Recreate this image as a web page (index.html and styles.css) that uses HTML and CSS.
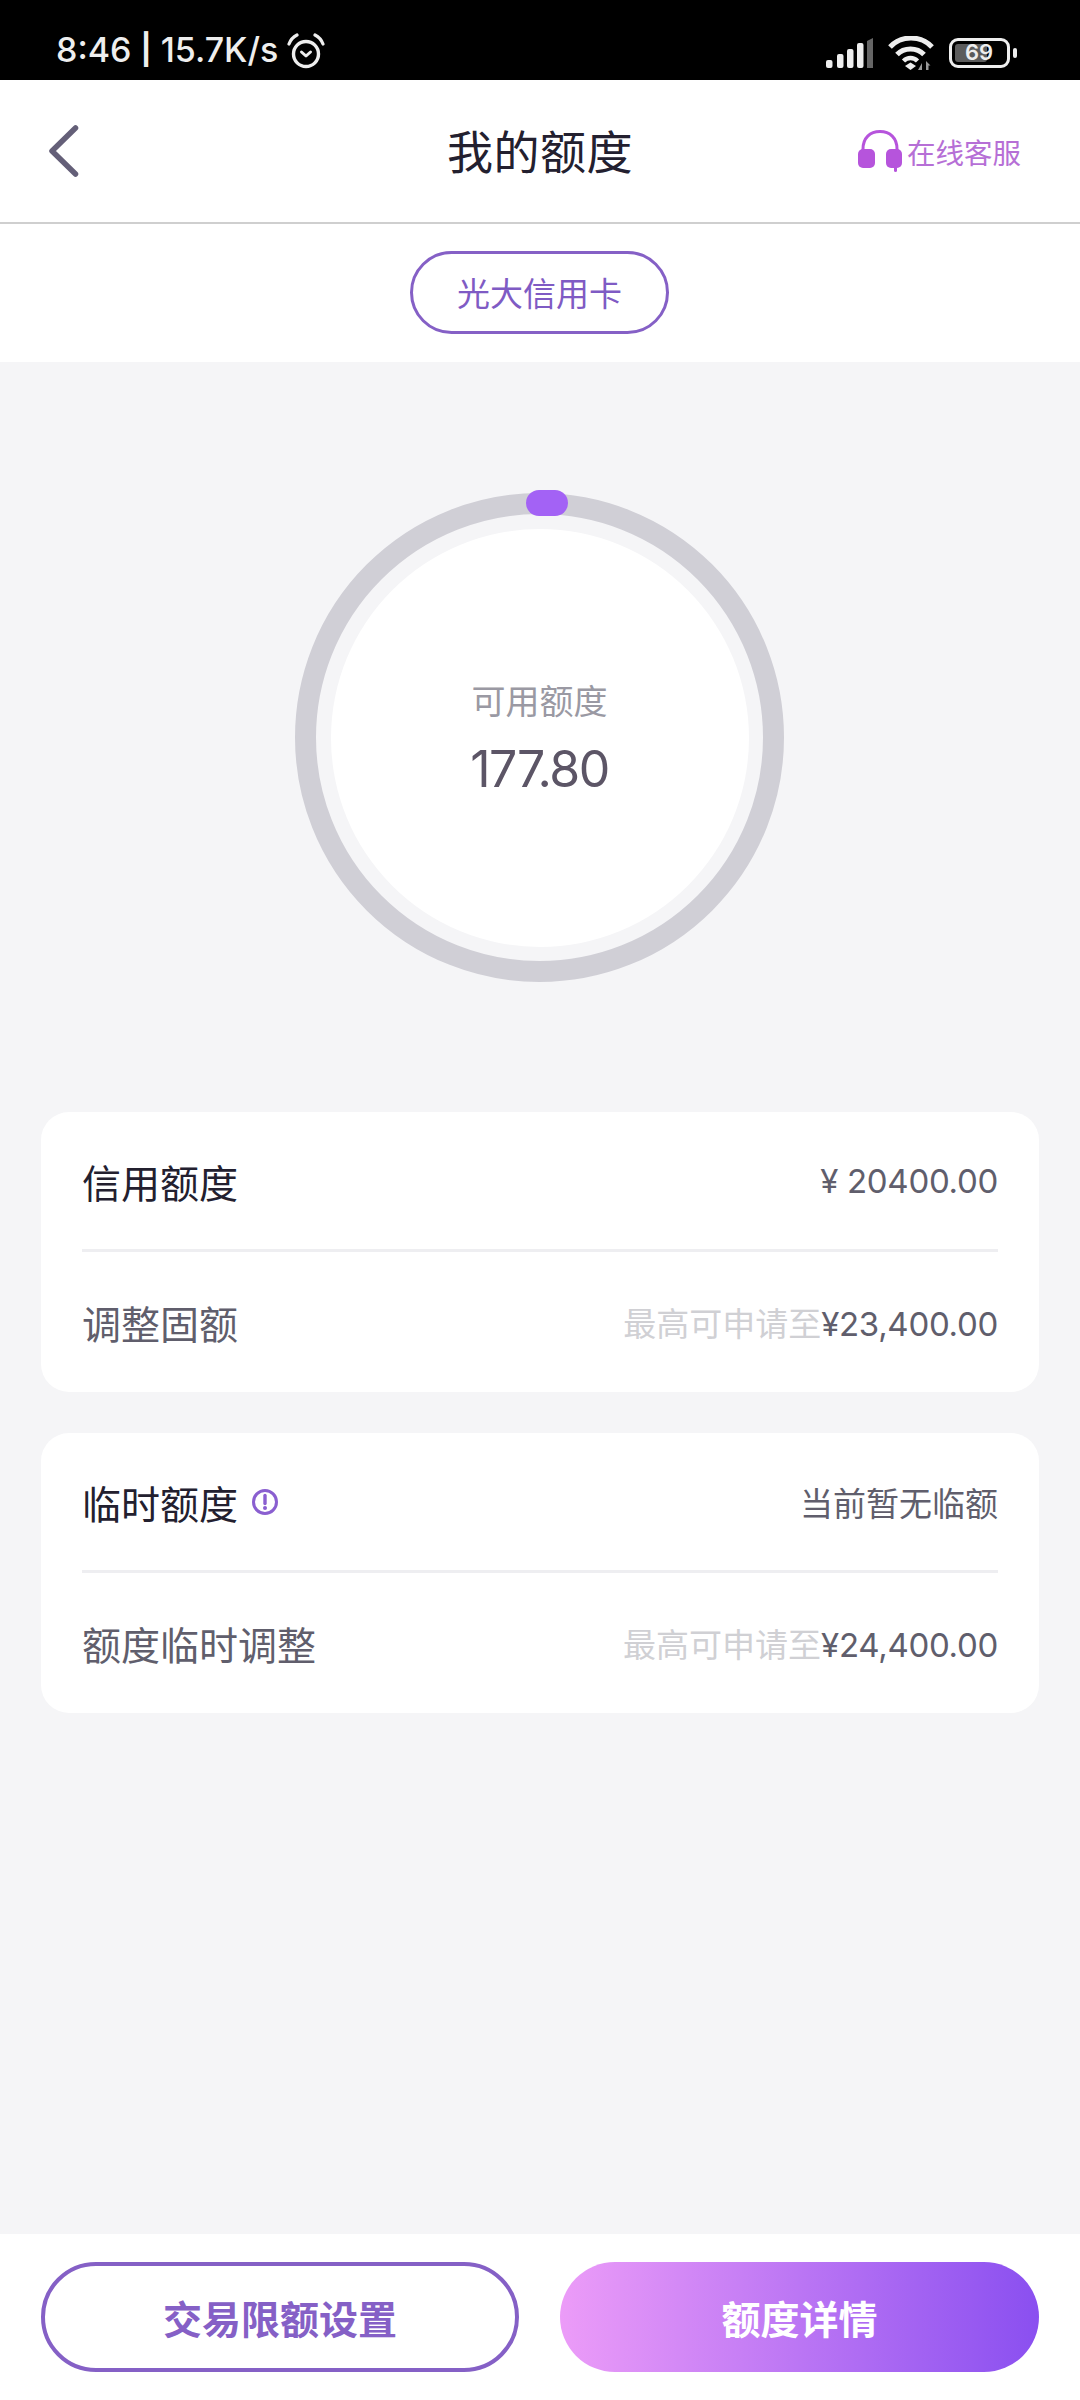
FILE: index.html
```html
<!DOCTYPE html>
<html lang="zh-CN">
<head>
    <meta charset="UTF-8">
    <meta name="viewport" content="width=device-width, initial-scale=1.0">
    <title>我的额度</title>
    <link rel="stylesheet" href="styles.css">
</head>

<body>

    <div class="statusbar">
        <div class="status-left">
            <span class="status-text">8:46 <b class="status-bar-sep">|</b> 15.7K/s</span>
            <svg width="38" height="38" viewBox="0 0 38 38">
                <circle cx="19" cy="23" r="12.500" fill="none" stroke="#eee" stroke-width="3.400"/>
                <path d="M14.500 21l4.500 4 4.500-4" fill="none" stroke="#eee" stroke-width="3" stroke-linecap="round" stroke-linejoin="round"/>
                <path d="M2 13C3.500 9 6 6 10 4M36 13C34.500 9 32 6 28 4" fill="none" stroke="#eee" stroke-width="3.200" stroke-linecap="round"/>
            </svg>
        </div>
        <div class="status-right">
            <svg width="47" height="30" viewBox="0 0 47 30">
                <rect x="0" y="22" width="6.500" height="8" rx="2" fill="#eee"/>
                <rect x="11" y="16" width="6.500" height="14" rx="2" fill="#eee"/>
                <rect x="21" y="11" width="6.500" height="19" rx="2" fill="#eee"/>
                <rect x="31" y="5" width="6.500" height="25" rx="2" fill="#eee"/>
                <path d="M41 3l6-3v30h-6z" fill="#666"/>
            </svg>
            <svg width="46" height="34" viewBox="0 0 46 34">
                <path d="M2 11C13-1 33-1 44 11" fill="none" stroke="#eee" stroke-width="5"/>
                <path d="M9 18.500C16 11 29 11 36 18.500" fill="none" stroke="#eee" stroke-width="5"/>
                <path d="M15.500 25c4-4 10-4 14 0" fill="none" stroke="#eee" stroke-width="4.500"/>
                <path d="M22.500 34l-5.500-4 5.500-3.500 5.500 3.500z" fill="#eee"/>
                <path d="M34 34v-7l-4 7zM38 34v-9l4.500 4.500h-2V34z" fill="#999"/>
            </svg>
            <div class="battery">
                <div class="battery-body"><div class="battery-fill"></div><span class="battery-num">69</span></div>
                <div class="battery-tip"></div>
            </div>
        </div>
    </div>

    <div class="topbar">
        <svg class="back-icon" width="30" height="52" viewBox="0 0 30 52">
            <path d="M26.500 3L3 26l23.500 23" fill="none" stroke="#645f78" stroke-width="5.500" stroke-linecap="round" stroke-linejoin="round"/>
        </svg>
        <h1 class="title">我的额度</h1>
        <div class="service">
            <svg width="44" height="42" viewBox="0 0 44 42">
                <path d="M5 22V19C5 8 12 1.500 22 1.500S39 8 39 19v3" fill="none" stroke="#b654dc" stroke-width="3"/>
                <rect x="0" y="19" width="17" height="19" rx="5" fill="#b654dc"/>
                <rect x="28" y="19" width="16" height="19" rx="5" fill="#b654dc"/>
                <path d="M37.500 37v3.500" stroke="#b654dc" stroke-width="3" stroke-linecap="round"/>
            </svg>
            <span>在线客服</span>
        </div>
    </div>

    <div class="card-switch">
        <div class="pill">光大信用卡</div>
    </div>

    <div class="main">
        <div class="ring-wrap">
            <div class="ring">
                <div class="ring-thumb"></div>
                <div class="ring-inner">
                    <div class="ring-label">可用额度</div>
                    <div class="ring-value">177.80</div>
                </div>
            </div>
        </div>

        <div class="panel">
            <div class="row row-top">
                <span class="row-title">信用额度</span>
                <span class="row-value">¥ 20400.00</span>
            </div>
            <div class="row">
                <span class="row-sub">调整固额</span>
                <span class="row-value"><span class="hint">最高可申请至</span>¥23,400.00</span>
            </div>
        </div>

        <div class="panel">
            <div class="row row-top">
                <span class="row-title">临时额度
                    <svg width="28" height="28" viewBox="0 0 28 28">
                        <circle cx="14" cy="14" r="11.500" fill="none" stroke="#8a5fd0" stroke-width="3"/>
                        <path d="M14 7.500v8" stroke="#8a5fd0" stroke-width="3.400" stroke-linecap="round"/>
                        <circle cx="14" cy="20" r="2" fill="#8a5fd0"/>
                    </svg>
                </span>
                <span class="row-note">当前暂无临额</span>
            </div>
            <div class="row">
                <span class="row-sub">额度临时调整</span>
                <span class="row-value"><span class="hint">最高可申请至</span>¥24,400.00</span>
            </div>
        </div>
    </div>

    <div class="bottom">
        <div class="btn btn-outline">交易限额设置</div>
        <div class="btn btn-fill">额度详情</div>
    </div>

</body>
</html>
```

FILE: styles.css
```css
* {
    box-sizing: border-box;
}

body {
    margin: 0;
    height: 2400px;
    display: flex;
    flex-direction: column;
    background-color: #f5f5f7;
    font-family: "Noto Sans CJK SC", "Inter", sans-serif;
}

.statusbar {
    height: 80px;
    background-color: #000;
    color: #eee;
    display: flex;
    justify-content: space-between;
    align-items: flex-end;
    padding: 0 63px 10px 56px;
}

.status-left {
    display: flex;
    align-items: center;
    gap: 9px;
}

.status-text {
    font-family: "Inter", sans-serif;
    font-size: 34px;
    font-weight: 500;
}

.status-bar-sep {
    font-weight: 700;
    font-size: 30px;
    position: relative;
    top: -2px;
}

.status-right {
    height: 34px;
    display: flex;
    align-items: center;
    gap: 15px;
}

.battery {
    display: flex;
    align-items: center;
    gap: 3px;
}

.battery-body {
    position: relative;
    width: 61px;
    height: 30px;
    border: 3.5px solid #eee;
    border-radius: 9px;
    padding: 3px;
}

.battery-fill {
    width: 32px;
    height: 100%;
    background-color: #5c5c5c;
    border-radius: 3px;
}

.battery-num {
    position: absolute;
    left: 13px;
    top: 0;
    font-family: "Inter", sans-serif;
    font-size: 22px;
    font-weight: 600;
    line-height: 23px;
}

.battery-tip {
    width: 4px;
    height: 10px;
    background-color: #eee;
    border-radius: 2px;
}

.topbar {
    height: 144px;
    background-color: #fff;
    border-bottom: 2px solid #cfcfcf;
    display: grid;
    grid-template-columns: 1fr auto 1fr;
    align-items: center;
    padding: 0 59px;
}

.back-icon {
    margin-left: -10px;
}

.title {
    margin: 0 0 4px;
    font-size: 46px;
    font-weight: 400;
    letter-spacing: 0.5px;
    color: #23202f;
}

.service {
    display: flex;
    align-items: center;
    justify-content: flex-end;
    gap: 5px;
    font-size: 28.5px;
    color: #b66fd6;
}

.card-switch {
    height: 138px;
    background-color: #fff;
    padding: 27px 1px 0 0;
    display: flex;
    justify-content: center;
}

.pill {
    width: 259px;
    height: 83px;
    padding-bottom: 2px;
    border: 3.5px solid #8560c6;
    border-radius: 42px;
    color: #7f5bc4;
    font-size: 33px;
    display: flex;
    align-items: center;
    justify-content: center;
}

.main {
    flex: 1;
    padding: 0 41px;
}

.ring-wrap {
    display: flex;
    justify-content: center;
    padding: 131px 1px 130px 0;
}

.ring {
    position: relative;
    width: 489px;
    height: 489px;
    border-radius: 50%;
    background-color: #f5f5f7;
    border: 21px solid #d0cfd6;
    display: flex;
    align-items: center;
    justify-content: center;
}

.ring-thumb {
    position: absolute;
    top: -24px;
    left: 210px;
    width: 42px;
    height: 26px;
    border-radius: 13px;
    background-color: #a362f5;
}

.ring-inner {
    width: 418px;
    height: 418px;
    padding-top: 3px;
    border-radius: 50%;
    background-color: #fff;
    display: flex;
    flex-direction: column;
    align-items: center;
    justify-content: center;
}

.ring-label {
    font-size: 34px;
    color: #9a99a3;
    line-height: 50px;
}

.ring-value {
    margin-top: 9px;
    font-family: "Inter", sans-serif;
    font-size: 50px;
    letter-spacing: -1.5px;
    color: #5c5566;
    line-height: 70px;
}

.panel {
    background-color: #fff;
    border-radius: 28px;
    padding: 0 41px;
    margin-bottom: 41px;
}

.row {
    height: 140px;
    display: flex;
    align-items: center;
    justify-content: space-between;
}

.row-top {
    border-bottom: 3px solid #eeeef1;
}

.row-title {
    display: flex;
    align-items: center;
    gap: 13px;
    font-size: 39px;
    color: #23202f;
}

.row-sub {
    font-size: 39px;
    color: #605e6c;
}

.row-value {
    font-family: "Inter", "Noto Sans CJK SC", sans-serif;
    font-size: 33px;
    letter-spacing: -0.3px;
    color: #605e6c;
}

.row-note {
    font-size: 33px;
    color: #605e6c;
}

.hint {
    letter-spacing: 0;
    color: #d0d0d4;
}

.bottom {
    height: 166px;
    background-color: #fff;
    display: grid;
    grid-template-columns: 478px 479px;
    gap: 41px;
    padding: 28px 41px 0;
}

.btn {
    height: 110px;
    border-radius: 55px;
    font-size: 39px;
    font-weight: 700;
    display: flex;
    align-items: center;
    justify-content: center;
}

.btn-outline {
    border: 4px solid #8560c6;
    color: #8560c6;
}

.btn-fill {
    color: #fff;
    background: linear-gradient(90deg, #ec9cf8, #8a4ff0);
}
```
